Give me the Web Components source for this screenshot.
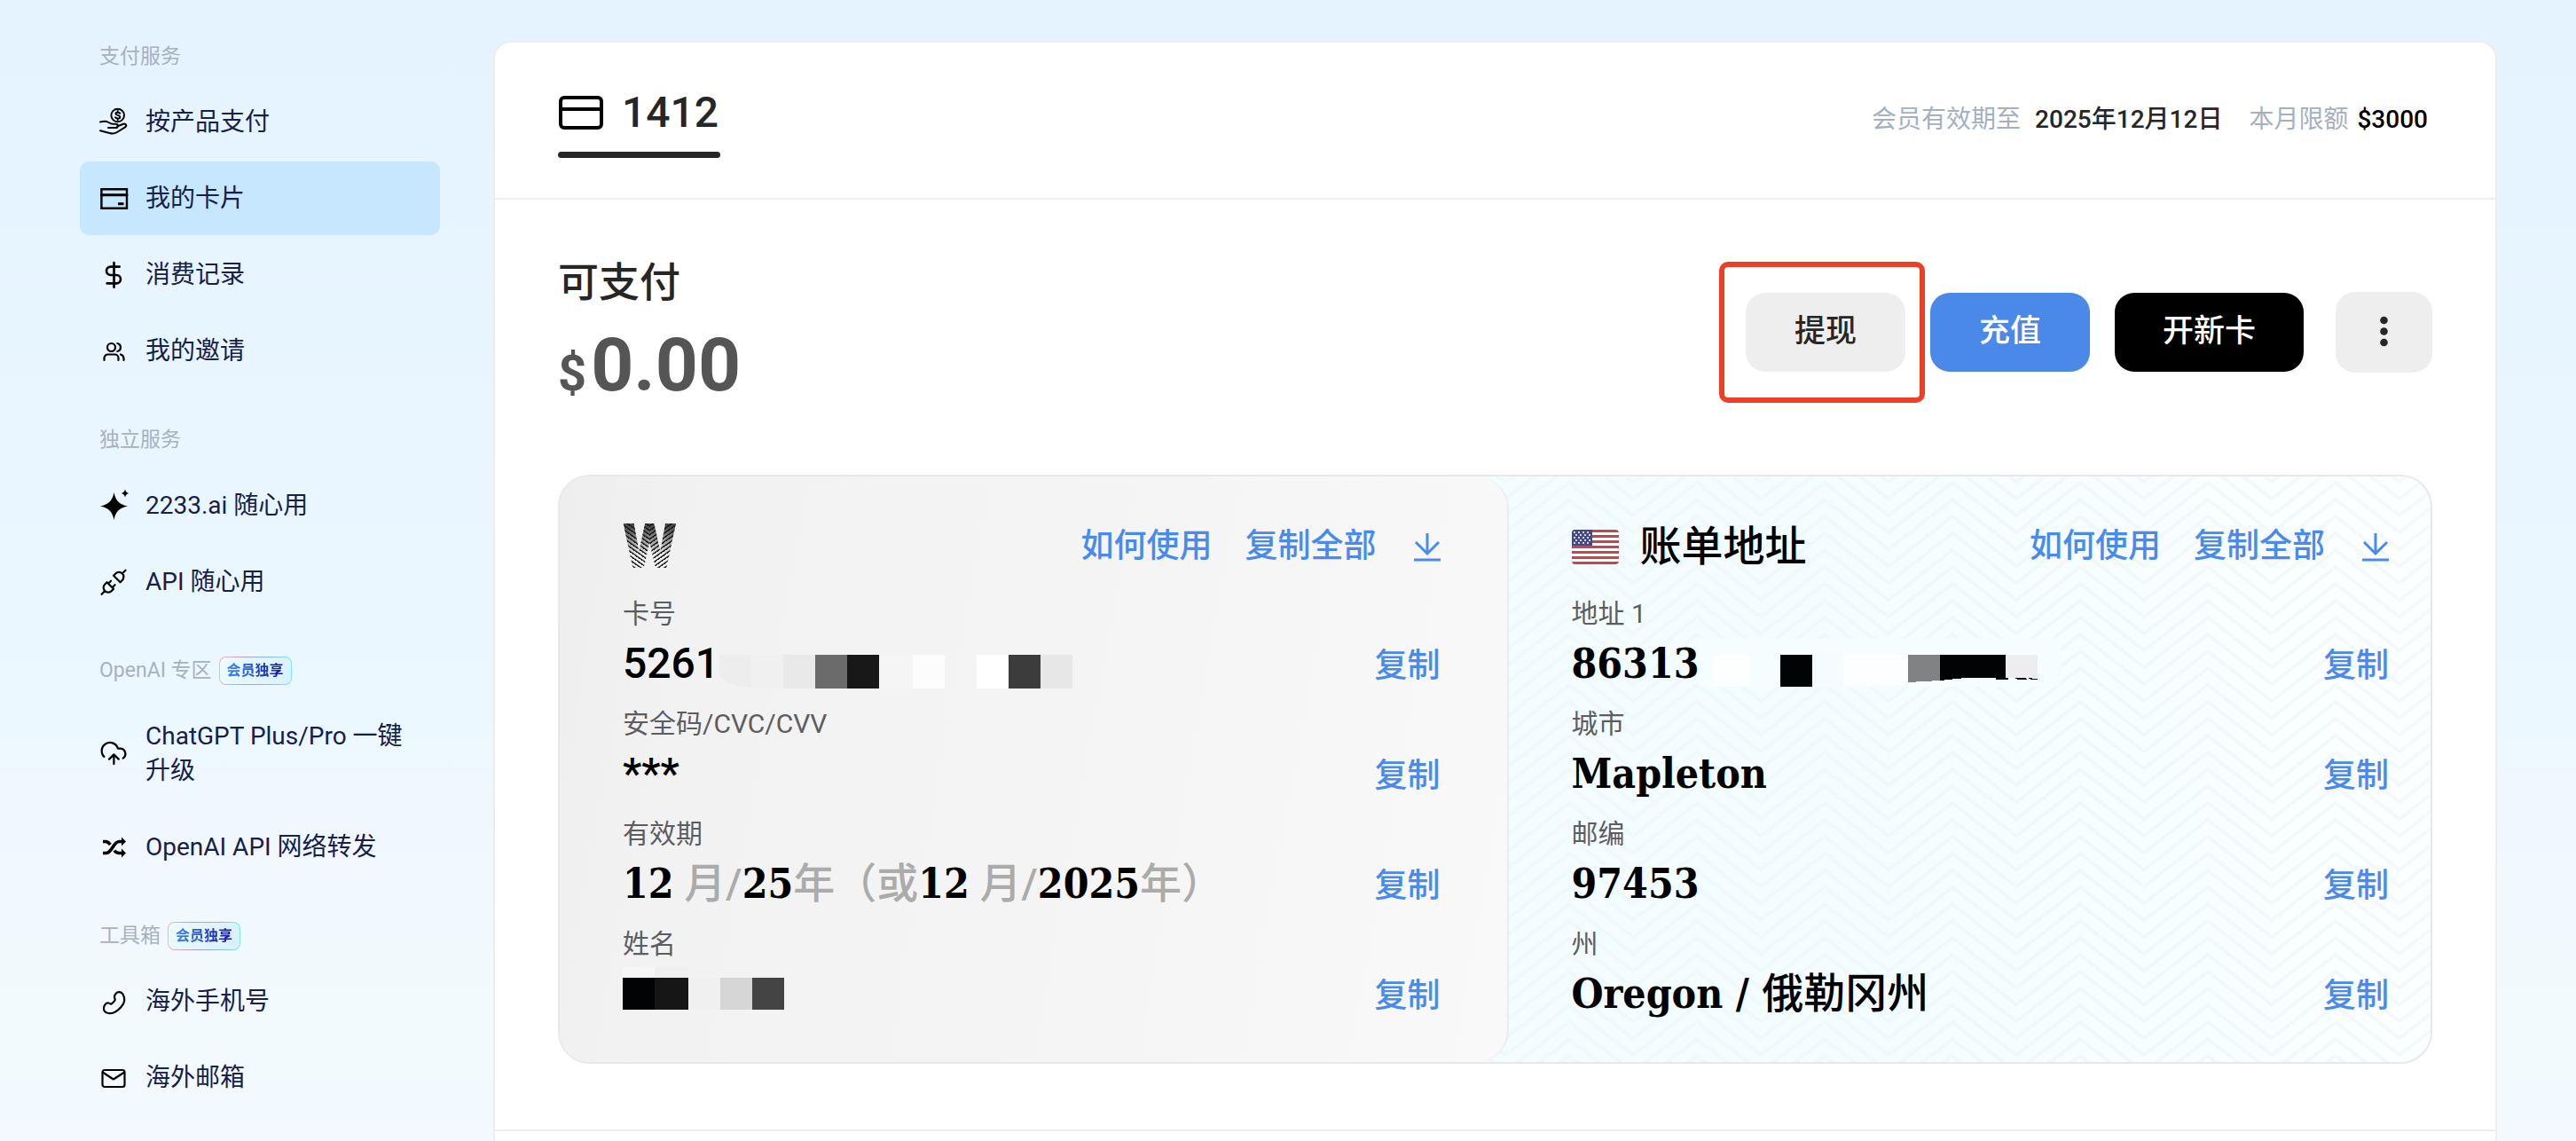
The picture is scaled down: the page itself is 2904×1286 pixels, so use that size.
<!DOCTYPE html>
<html lang="zh-CN">
<head>
<meta charset="utf-8">
<title>我的卡片</title>
<style>
    * { box-sizing: border-box; }
    body {
        --link: #4a8aec;
        --line: #ededed;
        margin: 0;
        min-height: 100vh;
        font-family: Roboto, "Noto Sans CJK SC", sans-serif;
        font-size: 28px;
        color: #262626;
        background: linear-gradient(#e4f3ff, #e9f6ff 40%, #ecf8ff 64%, #f0f7ff 70%, #f2fafd 90%, #f3f9ff);
    }
</style>
</head>
<body>
<vc-app>
    <vc-sidebar slot="side">
        <vc-nav-group label="支付服务">
            <vc-nav-item icon="hand">按产品支付</vc-nav-item>
            <vc-nav-item icon="card" active>我的卡片</vc-nav-item>
            <vc-nav-item icon="dollar">消费记录</vc-nav-item>
            <vc-nav-item icon="users">我的邀请</vc-nav-item>
        </vc-nav-group>
        <vc-nav-group label="独立服务">
            <vc-nav-item icon="spark">2233.ai 随心用</vc-nav-item>
            <vc-nav-item icon="plug">API 随心用</vc-nav-item>
        </vc-nav-group>
        <vc-nav-group label="OpenAI 专区" badge="会员独享">
            <vc-nav-item icon="cloud">ChatGPT Plus/Pro 一键升级</vc-nav-item>
            <vc-nav-item icon="shuffle">OpenAI API 网络转发</vc-nav-item>
        </vc-nav-group>
        <vc-nav-group label="工具箱" badge="会员独享">
            <vc-nav-item icon="phone">海外手机号</vc-nav-item>
            <vc-nav-item icon="mail">海外邮箱</vc-nav-item>
        </vc-nav-group>
    </vc-sidebar>

    <vc-panel>
        <vc-tab slot="tab">1412</vc-tab>
        <vc-meta slot="meta" until="2025年12月12日" limit="$3000"></vc-meta>
        <vc-balance slot="balance" label="可支付" amount="0.00"></vc-balance>
        <vc-btn slot="actions" marked>提现</vc-btn>
        <vc-btn slot="actions" kind="primary">充值</vc-btn>
        <vc-btn slot="actions" kind="dark">开新卡</vc-btn>
        <vc-btn slot="actions" kind="more"></vc-btn>

        <vc-pane kind="card">
            <vc-logo slot="title"></vc-logo>
            <vc-field label="卡号" plain>5261<vc-mosaic kind="number"></vc-mosaic></vc-field>
            <vc-field label="安全码/CVC/CVV" plain>***</vc-field>
            <vc-field label="有效期">12<i>&nbsp;月/</i>25<i>年（或</i>12<i>&nbsp;月/</i>2025<i>年）</i></vc-field>
            <vc-field label="姓名"><vc-mosaic kind="name"></vc-mosaic></vc-field>
        </vc-pane>
        <vc-pane kind="address">
            <vc-flag slot="title"></vc-flag>
            <span slot="title">账单地址</span>
            <vc-field label="地址 1">86313<vc-mosaic kind="street"></vc-mosaic></vc-field>
            <vc-field label="城市">Mapleton</vc-field>
            <vc-field label="邮编">97453</vc-field>
            <vc-field label="州">Oregon / <b>俄勒冈州</b></vc-field>
        </vc-pane>
    </vc-panel>
</vc-app>

<script>
(function () {
    const ICONS = {
        hand: `<g stroke-width="2"><circle cx="20.7" cy="8" r="7.3"/><path d="M1 15.5c4-1 7-1 9.500.5 1.500 1 3 1.800 5 1.800h3c3.200 0 3.200 4.200 0 4.200h-8.500M20 20.500l7-2.700c2.800-1 4.500 1.800 2 3.500l-9 5.700c-3 1.900-5.500 1.900-8.500 1L1 25.200"/><path d="M23.300 5.600c-.8-1.200-5-1.500-5 .5 0 2.200 5 1.400 5 3.800 0 2.200-4.400 2-5.300.4M20.700 3v1.500M20.700 11.500V13"/></g>`,
        card: `<g stroke-width="2.400" stroke-linejoin="miter"><path d="M2.400 5.200h28.600v21.600H2.400z"/><path d="M2.400 11.700H31" stroke-width="3"/><path d="M21 21.700h6.500" stroke-width="3" stroke-linecap="butt"/></g>`,
        dollar: `<g transform="scale(1.333)" stroke-width="2"><path d="M12.400 1.600v20.700M17 5H9.500a3.500 3.500 0 0 0 0 7h5a3.500 3.500 0 0 1 0 7H6.500"/></g>`,
        users: `<circle cx="13.500" cy="11.500" r="4.500"/><path d="M20.300 7a4.600 4.600 0 0 1 0 9M5.500 26v-2.500a4 4 0 0 1 4-4h8a4 4 0 0 1 4 4V26M24 19.500a5 5 0 0 1 3.500 4.500v2"/>`,
        spark: `<path fill="currentColor" stroke="none" d="M16.500 1c1.800 9 6 13.700 15.500 15.500C22.500 18.300 18.300 23 16.500 32 14.700 23 10.500 18.300 1 16.500 10.500 14.700 14.700 10 16.500 1zM29-2.500c.7 2.800 1.800 3.900 4.500 4.500-2.700.6-3.800 1.700-4.500 4.500-.7-2.800-1.800-3.900-4.500-4.500 2.700-.6 3.800-1.700 4.500-4.500z"/>`,
        plug: `<g transform="scale(1.5) translate(-1.300 -1.200)" stroke-width="1.500"><path d="M7 12l5 5-1.500 1.500a3.536 3.536 0 1 1-5-5zM17 12l-5-5 1.500-1.500a3.536 3.536 0 1 1 5 5zM3 21l2.500-2.500M18.500 5.500L21 3M10 11l-2 2M13 14l-2 2"/></g>`,
        cloud: `<g transform="scale(1.333)" stroke-width="1.700"><path d="M12.300 13v8M4 14.900A7 7 0 1 1 15.710 8h1.790a4.500 4.500 0 0 1 2.500 8.240M8.300 17l4-4 4 4"/></g>`,
        shuffle: `<path stroke-width="3.600" stroke-linecap="butt" d="M4 22.500h3.500c7 0 8-13 15-13H26M4 9.500h3c2.500 0 4 1.500 5.300 3.500M17 19.500c1.300 2 3 3 5.500 3H26"/><path fill="currentColor" stroke="none" d="M25 4.500l5 5-5 5zM25 17.500l5 5-5 5z"/>`,
        phone: `<path d="M18.500 7c2-2.500 6-2.500 8 .5 3 5 2 10-2 14.500-4 4.500-9 8-14 7-3-.5-5.500-2.500-5.500-5 0-4 2.500-7 5.500-6.500 2 .5 2 1.500 3 1 1.500-.8 3-2.500 4-4 .8-1.500-.5-2-.5-4 0-1.500.5-2.500 1.500-3.500z"/>`,
        mail: `<rect x="3.500" y="7" width="25" height="19" rx="2.500"/><path d="M4.500 10l11.300 7.500L27.500 10"/>`
    };

    function svg(name) {
        return `<svg class="icon" viewBox="0 0 32 32" width="32" height="32" fill="none" stroke="currentColor" stroke-width="2.200" stroke-linecap="round" stroke-linejoin="round" overflow="visible" aria-hidden="true">${ICONS[name]}</svg>`;
    }

    // render() gives the markup of the shadow root
    class Base extends HTMLElement {
        constructor() {
            super();
            this.attachShadow({ mode: 'open' });
        }
        connectedCallback() {
            this.shadowRoot.innerHTML = '<style>*{box-sizing:border-box}</style>' + this.render();
        }
        attr(name) {
            return this.getAttribute(name) || '';
        }
    }

    class App extends Base {
        render() {
            return `
            <style>
                :host { display: flex; gap: 60px; min-height: 100vh; padding: 46px 89px 0 90px; }
                aside { flex: 0 0 406px; }
                main { flex: 1; min-width: 0; display: flex; }
            </style>
            <aside><slot name="side"></slot></aside>
            <main><slot></slot></main>`;
        }
    }

    class Sidebar extends Base {
        render() {
            return `
            <style>
                :host { display: block; padding-top: 2px; }
                nav { display: flex; flex-direction: column; gap: 43px; }
            </style>
            <nav><slot></slot></nav>`;
        }
    }

    class NavGroup extends Base {
        render() {
            const badge = this.attr('badge');
            return `
            <style>
                :host { display: block; }
                header {
                    display: flex;
                    align-items: center;
                    gap: 8px;
                    margin-bottom: 16px;
                    padding-left: 22px;
                    font-size: 23px;
                    line-height: 32px;
                    color: #a7b1bf;
                }
                .badge {
                    padding: 0 8px;
                    border: 1px solid transparent;
                    border-radius: 8px;
                    font-size: 16px;
                    font-weight: 700;
                    line-height: 30px;
                    background: linear-gradient(110deg, #ecfcff, #d8f0ff) padding-box, linear-gradient(90deg, #ffb3a8, #a99cf5 35%, #8fb5f5 70%, #7cf0dc) border-box;
                }
                .badge span {
                    display: block;
                    color: transparent;
                    background: linear-gradient(90deg, #3d86f5, #1010a8);
                    -webkit-background-clip: text;
                    background-clip: text;
                }
                .items { display: flex; flex-direction: column; gap: 3px; }
            </style>
            <header>${this.attr('label')}${badge ? `<div class="badge"><span>${badge}</span></div>` : ''}</header>
            <div class="items"><slot></slot></div>`;
        }
    }

    class NavItem extends Base {
        render() {
            return `
            <style>
                :host { display: block; }
                a {
                    display: flex;
                    align-items: center;
                    gap: 20px;
                    padding: 22px;
                    border-radius: 10px;
                    line-height: 39px;
                    color: #16204a;
                    text-decoration: none;
                }
                :host([active]) a { background: #c7e7ff; }
                .icon { flex: none; color: #000; }
            </style>
            <a href="#">${svg(this.attr('icon'))}<span><slot></slot></span></a>`;
        }
    }

    class Panel extends Base {
        render() {
            return `
            <style>
                :host {
                    display: block;
                    flex: 1;
                    min-width: 0;
                    background: #fff;
                    border: 2px solid var(--line);
                    border-bottom: 0;
                    border-radius: 20px 20px 0 0;
                }
                header {
                    display: flex;
                    align-items: center;
                    justify-content: space-between;
                    padding: 48px 76px 45px 71px;
                    border-bottom: 2px solid var(--line);
                }
                section { padding: 61px 71px 74px; border-bottom: 2px solid var(--line); }
                .top { display: flex; align-items: center; justify-content: space-between; margin-bottom: 73px; }
                .actions { display: flex; align-items: center; gap: 28px; }
                .cards {
                    display: flex;
                    overflow: hidden;
                    border: 2px solid #e8e8e8;
                    border-radius: 36px;
                    background: #f3fcff;
                }
            </style>
            <header><slot name="tab"></slot><slot name="meta"></slot></header>
            <section>
                <div class="top">
                    <slot name="balance"></slot>
                    <div class="actions"><slot name="actions"></slot></div>
                </div>
                <div class="cards"><slot></slot></div>
            </section>`;
        }
    }

    class Tab extends Base {
        render() {
            return `
            <style>
                :host { display: block; }
                button {
                    display: flex;
                    align-items: center;
                    gap: 20px;
                    padding: 0 2px 0 0;
                    border: 0;
                    background: none;
                    font: 500 48px/62px Roboto, sans-serif;
                    color: #262626;
                }
                .bar { height: 7px; margin-top: 13px; border-radius: 4px; background: #262626; }
            </style>
            <button type="button">
                <svg width="52" height="38" viewBox="0 0 52 38" fill="none" stroke="#000" stroke-width="4" aria-hidden="true"><rect x="3" y="2" width="46" height="34" rx="4"/><path d="M3 15h46"/></svg>
                <slot></slot>
            </button>
            <div class="bar"></div>`;
        }
    }

    class Meta extends Base {
        render() {
            return `
            <style>
                :host { display: flex; gap: 30px; padding-bottom: 4px; line-height: 40px; color: #a3b0c2; }
                div { display: flex; gap: 16px; }
                div + div { gap: 10px; }
                b { font-weight: 500; color: #262626; }
                div + div b { color: #000; }
            </style>
            <div>会员有效期至 <b>${this.attr('until')}</b></div>
            <div>本月限额 <b>${this.attr('limit')}</b></div>`;
        }
    }

    class Balance extends Base {
        render() {
            return `
            <style>
                :host { display: block; padding-bottom: 5px; }
                h2 { margin: 0 0 17px; font-size: 46px; line-height: 64px; font-weight: 500; }
                p { display: flex; align-items: baseline; gap: 5px; margin: 0; font-size: 84px; font-weight: 700; line-height: 90px; color: #555; }
                small { font-size: 56px; line-height: 60px; }
            </style>
            <h2>${this.attr('label')}</h2>
            <p><small>$</small>${this.attr('amount')}</p>`;
        }
    }

    class Btn extends Base {
        render() {
            const more = this.attr('kind') == 'more';
            return `
            <style>
                :host { display: block; position: relative; }
                button {
                    display: block;
                    min-width: 180px;
                    height: 89px;
                    padding: 0 54px;
                    border: 0;
                    border-radius: 22px;
                    font: 500 35px/40px Roboto, "Noto Sans CJK SC", sans-serif;
                    color: #262626;
                    background: #eee;
                }
                :host([kind=primary]) button { color: #fff; background: #4a89e8; }
                :host([kind=dark]) button { color: #fff; background: #000; }
                :host([kind=more]) { margin-left: 8px; }
                :host([kind=more]) button { min-width: 0; height: 91px; padding: 0 50px; }
                svg { display: block; }
                .mark {
                    position: absolute;
                    inset: -35px -22px -35px -30px;
                    border: 6px solid #eb4025;
                    border-radius: 10px;
                    pointer-events: none;
                }
            </style>
            <button type="button"${more ? ' aria-label="更多"' : ''}>${more
                ? '<svg width="9" height="36" viewBox="0 0 9 36" fill="#262626"><circle cx="4.500" cy="5" r="4.300"/><circle cx="4.500" cy="17.500" r="4.300"/><circle cx="4.500" cy="30" r="4.300"/></svg>'
                : '<slot></slot>'}</button>
            ${this.hasAttribute('marked') ? '<div class="mark"></div>' : ''}`;
        }
    }

    class Pane extends Base {
        render() {
            let zigzag = '';
            for (let y = -57; y <= 38; y += 19) zigzag += `M-1 ${y + 57}L72 ${y}L145 ${y + 57}`;
            const pattern = `
            <svg class="pattern" aria-hidden="true">
                <defs>
                    <pattern id="zz" x="36" y="7" width="144" height="19" patternUnits="userSpaceOnUse">
                        <path d="${zigzag}" fill="none" stroke="#e9f1f5" stroke-opacity=".4" stroke-width="4"/>
                    </pattern>
                </defs>
                <rect width="100%" height="100%" fill="url(#zz)"/>
            </svg>`;
            return `
            <style>
                :host {
                    display: block;
                    box-sizing: content-box;
                    flex: 1 1 0;
                    position: relative;
                    padding: 49px 75px 43px 71px;
                }
                :host([kind=card]) {
                    background: linear-gradient(100deg, #eee, #f2f2f2 15%, #f4f4f4 50%, #f9f9f9);
                    border-right: 2px solid #ececee;
                    border-radius: 0 36px 36px 0;
                    z-index: 1;
                }
                :host([kind=address]) {
                    margin-left: -40px;
                    padding-left: 111px;
                    padding-right: 47px;
                    background: linear-gradient(80deg, #f3fdff 40%, #fcffff);
                }
                .pattern { position: absolute; inset: 0; width: 100%; height: 100%; }
                .body { position: relative; }
                header { display: flex; align-items: center; height: 60px; margin-bottom: 24px; }
                h3 { display: flex; align-items: center; gap: 24px; margin: 0 auto 0 0; font-size: 47px; font-weight: 500; line-height: 60px; color: #000; }
                a, button { padding: 0; border: 0; background: none; font: 500 37px/48px Roboto, "Noto Sans CJK SC", sans-serif; color: var(--link); text-decoration: none; }
                a { margin-right: 37px; }
                .get { margin-left: 42px; }
                svg { display: block; }
                .fields { display: flex; flex-direction: column; gap: 12px; }
            </style>
            ${this.attr('kind') == 'address' ? pattern : ''}
            <div class="body">
                <header>
                    <h3><slot name="title"></slot></h3>
                    <a href="#">如何使用</a>
                    <button type="button">复制全部</button>
                    <button type="button" class="get" aria-label="下载">
                        <svg width="30" height="34" viewBox="0 0 30 34" fill="none" stroke="currentColor" stroke-width="3"><path d="M15 2v22M2 12l13 13 13-13" /><path d="M0 32h30"/></svg>
                    </button>
                </header>
                <div class="fields"><slot></slot></div>
            </div>`;
        }
    }

    class Field extends Base {
        render() {
            return `
            <style>
                :host { display: block; }
                .label { font-size: 30px; line-height: 44px; color: #5c5d62; }
                .row { display: flex; align-items: center; justify-content: space-between; height: 68px; }
                .value {
                    display: flex;
                    align-items: center;
                    white-space: pre;
                    font: 700 46px/68px "DejaVu Serif Condensed", "DejaVu Serif", "Noto Sans CJK SC", serif;
                    color: #000;
                }
                :host([plain]) .value { font: 500 48px/68px Roboto, sans-serif; }
                ::slotted(i), ::slotted(b) { font: 500 47px/68px Roboto, "Noto Sans CJK SC", sans-serif; }
                ::slotted(i) { color: #ababab; }
                button { padding: 6px 0 0; border: 0; background: none; font: 500 37px/48px Roboto, "Noto Sans CJK SC", sans-serif; color: var(--link); }
            </style>
            <div class="label">${this.attr('label')}</div>
            <div class="row">
                <div class="value"><slot></slot></div>
                <button type="button">复制</button>
            </div>`;
        }
    }

    // covers the private part of a value: [x, y, width, height, colour]
    const BLOCKS = {
        number: [[36, 24, 36, 38, '#f0f0f0'], [72, 24, 36, 38, '#e9e9e9'], [108, 24, 36, 38, '#6b6b6b'], [144, 24, 36, 38, '#181818'], [180, 24, 38, 38, '#f5f5f5'], [218, 24, 36, 38, '#fcfcfc'], [290, 24, 36, 38, '#fff'], [326, 24, 36, 38, '#3b3c3b'], [362, 24, 36, 38, '#e7e7e7']],
        name: [[0, 4, 36, 12, '#f6f6f6'], [36, 4, 38, 12, '#efefef'], [0, 16, 37, 36, '#020305'], [36, 16, 38, 36, '#161616'], [74, 16, 36, 36, '#f0f0f0'], [110, 16, 36, 36, '#d6d6d6'], [146, 16, 36, 36, '#444']],
        street: [[0, 6, 408, 54, '#f5fdff'], [17, 24, 40, 36, '#fdffff'], [92, 24, 36, 36, '#020305'], [128, 24, 36, 36, '#f5fcff'], [164, 24, 72, 34, '#fcfeff'], [346, 24, 36, 26, '#ededef']]
    };
    const EXTRA = {
        number: '<path fill="#ededed" d="M0 24h36v37C16 60 2 54 0 46z"/>',
        name: '',
        street: '<path fill="#808283" d="M236 24h36v29l-36 2z"/><path fill="#020305" d="M272 24h74v26h3v2h-14v-2h-34l-29 3zM356 50h12l2 2h-10zM370 50l12 1v1h-6z"/>'
    };

    class Mosaic extends Base {
        render() {
            const kind = this.attr('kind');
            const rects = BLOCKS[kind].map(([x, y, w, h, c]) => `<rect x="${x}" y="${y}" width="${w}" height="${h}" fill="${c}"/>`).join('');
            return `
            <style>
                :host { display: block; white-space: normal; }
                svg { display: block; }
            </style>
            <svg width="408" height="68" viewBox="0 0 408 68" shape-rendering="crispEdges" aria-hidden="true">${rects}${EXTRA[kind]}</svg>`;
        }
    }

    class Logo extends Base {
        render() {
            return `
            <style>
                :host { display: block; }
                span {
                    display: block;
                    font: 900 70px/60px Roboto, sans-serif;
                    color: transparent;
                    background:
                        linear-gradient(rgba(20, 20, 20, .75) 8px, rgba(20, 20, 20, 0) 40px),
                        repeating-linear-gradient(35deg, #222 0 1px, transparent 2px 4px) 0 0 / 50% 100% no-repeat,
                        repeating-linear-gradient(-35deg, #222 0 1px, transparent 2px 4px) 100% 0 / 50% 100% no-repeat;
                    -webkit-background-clip: text;
                    background-clip: text;
                }
            </style>
            <span>W</span>`;
        }
    }

    class Flag extends Base {
        render() {
            let stripes = '';
            let stars = '';
            for (let i = 0; i < 13; i += 2) stripes += `<rect y="${i * 3}" width="53" height="3" fill="#c8444f"/>`;
            for (let r = 0; r < 5; r++) {
                for (let c = 0; c < 4; c++) stars += `<circle cx="${3 + c * 5 + (r % 2) * 2}" cy="${3 + r * 3}" r="1" fill="#fff"/>`;
            }
            return `
            <style>
                :host { display: block; }
                svg { display: block; border-radius: 4px; }
            </style>
            <svg width="53" height="39" viewBox="0 0 53 39" aria-hidden="true"><rect width="53" height="39" fill="#fff"/>${stripes}<rect width="23" height="18" fill="#474a80"/>${stars}</svg>`;
        }
    }

    customElements.define('vc-app', App);
    customElements.define('vc-sidebar', Sidebar);
    customElements.define('vc-nav-group', NavGroup);
    customElements.define('vc-nav-item', NavItem);
    customElements.define('vc-panel', Panel);
    customElements.define('vc-tab', Tab);
    customElements.define('vc-meta', Meta);
    customElements.define('vc-balance', Balance);
    customElements.define('vc-btn', Btn);
    customElements.define('vc-pane', Pane);
    customElements.define('vc-field', Field);
    customElements.define('vc-mosaic', Mosaic);
    customElements.define('vc-logo', Logo);
    customElements.define('vc-flag', Flag);
})();
</script>
</body>
</html>
